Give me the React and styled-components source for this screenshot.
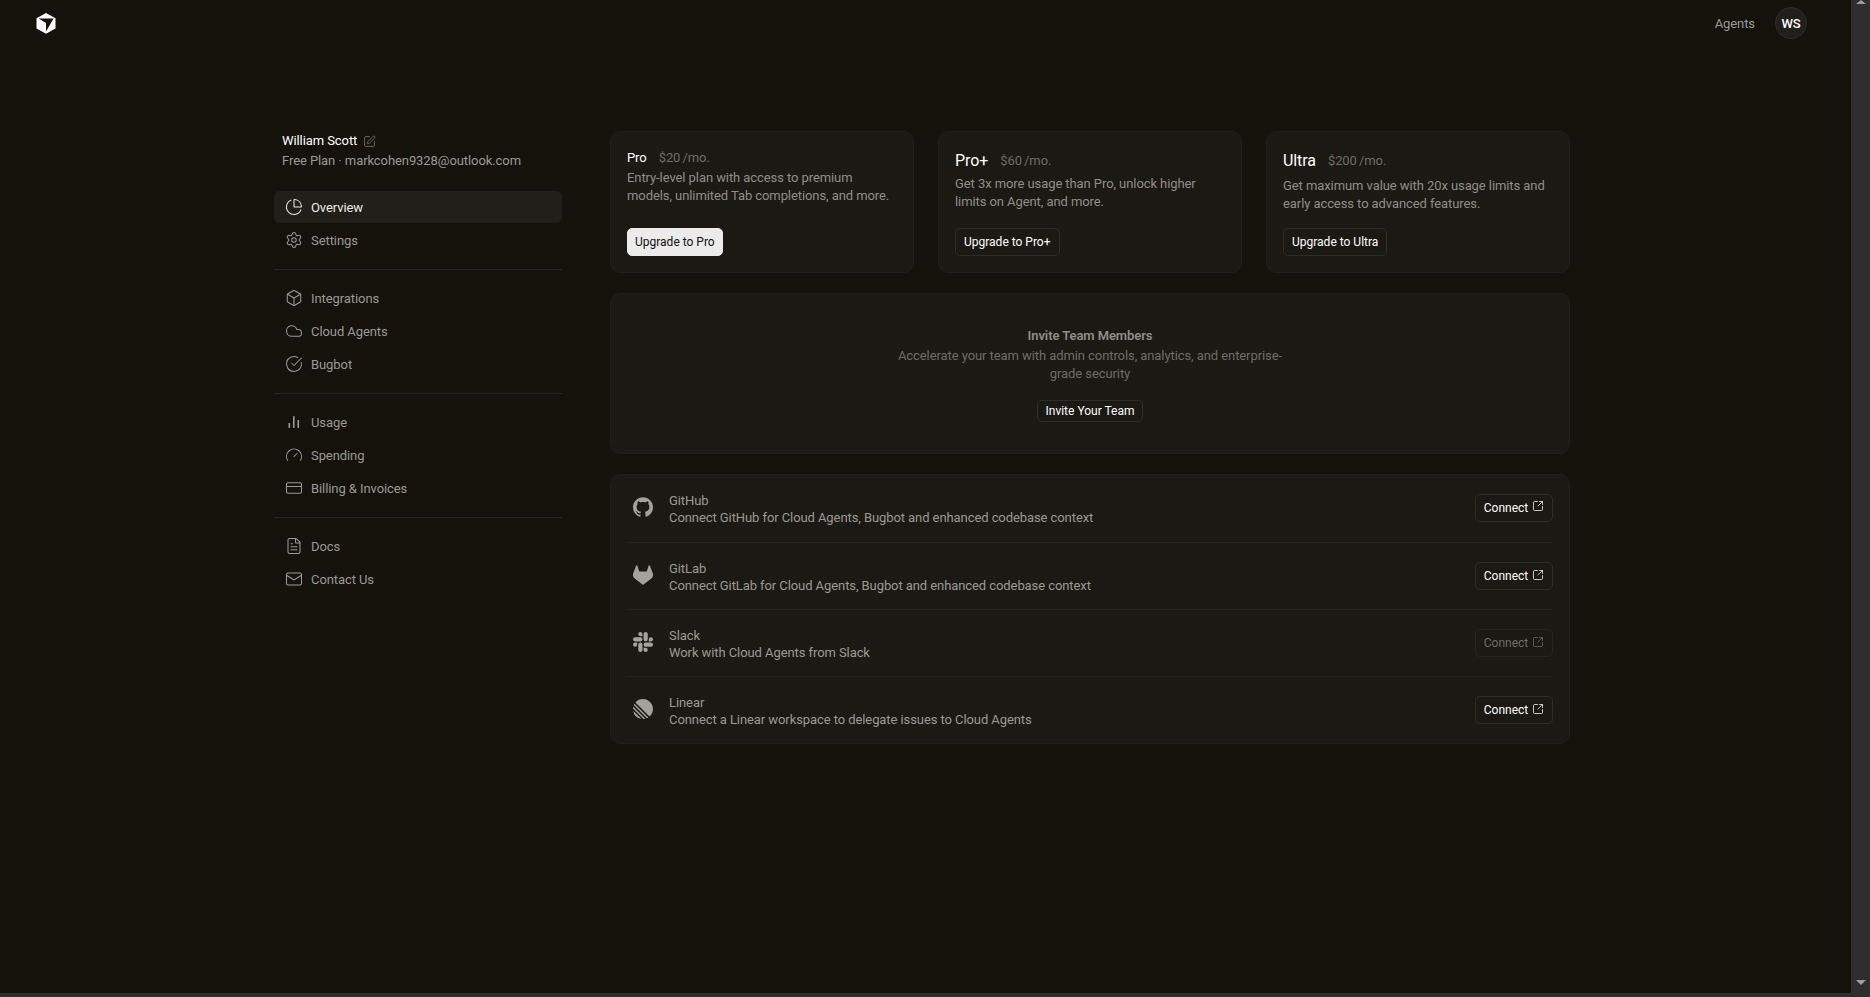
import React from "react";
import styled, { createGlobalStyle } from "styled-components";
import {
  ChartPie,
  Settings,
  Box,
  Cloud,
  CircleCheckBig,
  Gauge,
  CreditCard,
  FileText,
  Mail,
  SquarePen,
  SquareArrowOutUpRight,
} from "lucide-react";
import { SiGithub, SiGitlab, SiSlack, SiLinear } from "react-icons/si";

const GlobalStyle = createGlobalStyle`
  html, body {
    margin: 0;
    height: 100%;
    overflow: hidden;
    background: #14120b;
  }
  * { box-sizing: border-box; }
`;

const UsageIcon = () => (
  <svg width="18" height="18" viewBox="0 0 18 18" fill="currentColor">
    <rect x="3.5" y="10" width="1.6" height="5" rx="0.4" />
    <rect x="8" y="3" width="1.6" height="12" rx="0.4" />
    <rect x="12.5" y="7" width="1.6" height="8" rx="0.4" />
  </svg>
);

const navGroups = [
  [
    { label: "Overview", icon: ChartPie, active: true },
    { label: "Settings", icon: Settings },
  ],
  [
    { label: "Integrations", icon: Box },
    { label: "Cloud Agents", icon: Cloud },
    { label: "Bugbot", icon: CircleCheckBig },
  ],
  [
    { label: "Usage", icon: UsageIcon },
    { label: "Spending", icon: Gauge },
    { label: "Billing & Invoices", icon: CreditCard },
  ],
  [
    { label: "Docs", icon: FileText },
    { label: "Contact Us", icon: Mail },
  ],
];

const plans = [
  {
    name: "Pro",
    price: "$20",
    small: true,
    gap: 3,
    text: "Entry-level plan with access to premium models, unlimited Tab completions, and more.",
    cta: "Upgrade to Pro",
    primary: true,
  },
  {
    name: "Pro+",
    price: "$60",
    gap: 3,
    text: "Get 3x more usage than Pro, unlock higher limits on Agent, and more.",
    cta: "Upgrade to Pro+",
  },
  {
    name: "Ultra",
    price: "$200",
    gap: 5,
    text: "Get maximum value with 20x usage limits and early access to advanced features.",
    cta: "Upgrade to Ultra",
  },
];

const integrations = [
  { name: "GitHub", icon: SiGithub, text: "Connect GitHub for Cloud Agents, Bugbot and enhanced codebase context" },
  { name: "GitLab", icon: SiGitlab, text: "Connect GitLab for Cloud Agents, Bugbot and enhanced codebase context" },
  { name: "Slack", icon: SiSlack, text: "Work with Cloud Agents from Slack", disabled: true },
  { name: "Linear", icon: SiLinear, text: "Connect a Linear workspace to delegate issues to Cloud Agents" },
];

const Logo = () => (
  <svg width="20" height="22" viewBox="0 0 20 22">
    <path
      fill="#fff"
      fillRule="evenodd"
      d="M10 1 19.5 6.2V16.6L10 21.8.5 16.6V6.2ZM2.6 6.6 17.6 6.6 10 19.6 10 11Z"
    />
  </svg>
);

export default function App() {
  return (
    <Frame>
      <GlobalStyle />
      <Viewport>
        <Page>
          <Header>
            <Logo />
            <HeaderRight>
              <HeaderLink>Agents</HeaderLink>
              <Avatar>WS</Avatar>
            </HeaderRight>
          </Header>
          <Content>
            <Sidebar>
              <Profile>
                <ProfileName>
                  William Scott
                  <SquarePen size={13} strokeWidth={1.5} color="#77766f" />
                </ProfileName>
                <ProfileMeta>Free Plan · markcohen9328@outlook.com</ProfileMeta>
              </Profile>
              {navGroups.map((group, i) => (
                <NavGroup key={i}>
                  {group.map(({ label, icon: Icon, active }) => (
                    <NavItem key={label} $active={active}>
                      <Icon size={18} strokeWidth={1.4} />
                      {label}
                    </NavItem>
                  ))}
                </NavGroup>
              ))}
            </Sidebar>
            <Main>
              <PlanGrid>
                {plans.map((plan) => (
                  <PlanCard key={plan.name}>
                    <PlanHead $small={plan.small}>
                      <PlanName $small={plan.small}>{plan.name}</PlanName>
                      <PlanPrice>{plan.price} /mo.</PlanPrice>
                    </PlanHead>
                    <PlanText $gap={plan.gap}>{plan.text}</PlanText>
                    <Button $primary={plan.primary}>{plan.cta}</Button>
                  </PlanCard>
                ))}
              </PlanGrid>
              <InviteCard>
                <InviteTitle>Invite Team Members</InviteTitle>
                <InviteText>
                  Accelerate your team with admin controls, analytics, and enterprise-grade security
                </InviteText>
                <InviteButton>Invite Your Team</InviteButton>
              </InviteCard>
              <IntegrationCard>
                {integrations.map(({ name, icon: Icon, text, disabled }) => (
                  <IntegrationRow key={name}>
                    <IntegrationIcon>
                      <Icon size={20} />
                    </IntegrationIcon>
                    <IntegrationBody>
                      <IntegrationName>{name}</IntegrationName>
                      <IntegrationText>{text}</IntegrationText>
                    </IntegrationBody>
                    <ConnectButton $disabled={disabled}>
                      Connect
                      <SquareArrowOutUpRight size={12} strokeWidth={1.5} />
                    </ConnectButton>
                  </IntegrationRow>
                ))}
              </IntegrationCard>
            </Main>
          </Content>
        </Page>
        <ScrollTrack>
          <ArrowUp />
          <ArrowDown />
        </ScrollTrack>
      </Viewport>
      <ScrollBottom />
    </Frame>
  );
}

const Frame = styled.div`
  height: 997px;
  display: flex;
  flex-direction: column;
  font-family: "Roboto", "Liberation Sans", sans-serif;
  font-size: 13px;
  letter-spacing: -0.08px;
  color: #9a9994;
  background: #14120b;
`;

const Viewport = styled.div`
  flex: 1;
  display: flex;
  min-height: 0;
`;

const Page = styled.div`
  flex: 1;
  min-width: 0;
`;

const ScrollTrack = styled.div`
  width: 19px;
  background: #2e2e2e;
  display: flex;
  flex-direction: column;
  justify-content: space-between;
  align-items: center;
  padding-bottom: 8px;
`;

const ArrowUp = styled.div`
  width: 0;
  height: 0;
  border-left: 5px solid transparent;
  border-right: 5px solid transparent;
  border-bottom: 4px solid #9d9d9d;
`;

const ArrowDown = styled.div`
  width: 0;
  height: 0;
  border-left: 5px solid transparent;
  border-right: 5px solid transparent;
  border-top: 5px solid #9d9d9d;
`;

const ScrollBottom = styled.div`
  height: 4px;
  background: #2e2e2e;
`;

const Header = styled.header`
  height: 46px;
  padding: 0 44px 0 36px;
  display: flex;
  align-items: center;
  justify-content: space-between;
`;

const HeaderRight = styled.div`
  display: flex;
  align-items: center;
  gap: 20px;
`;

const HeaderLink = styled.span`
  color: #9a9994;
`;

const Avatar = styled.div`
  width: 32px;
  height: 32px;
  border-radius: 50%;
  background: #211f19;
  border: 1px solid #2e2c27;
  color: #fff;
  font-weight: 500;
  display: flex;
  align-items: center;
  justify-content: center;
`;

const Content = styled.div`
  display: flex;
  gap: 48px;
  padding: 85px 0 0 274px;
`;

const Sidebar = styled.aside`
  width: 288px;
  flex: none;
`;

const Profile = styled.div`
  padding: 1px 8px 0;
  height: 60px;
`;

const ProfileName = styled.div`
  color: #fff;
  line-height: 18px;
  display: flex;
  align-items: center;
  gap: 6px;
`;

const ProfileMeta = styled.div`
  line-height: 18px;
  margin-top: 2px;
`;

const NavGroup = styled.nav`
  display: flex;
  flex-direction: column;
  gap: 1px;
  padding-bottom: 13px;
  margin-bottom: 12px;
  border-bottom: 1px solid #26241f;

  &:last-child {
    border-bottom: none;
  }
`;

const NavItem = styled.a`
  height: 32px;
  padding: 0 11px;
  border-radius: 6px;
  display: flex;
  align-items: center;
  gap: 8px;
  color: ${(p) => (p.$active ? "#ecebe8" : "#9a9994")};
  background: ${(p) => (p.$active ? "#211f19" : "transparent")};
`;

const Main = styled.main`
  width: 960px;
  flex: none;
  display: flex;
  flex-direction: column;
  gap: 20px;
`;

const PlanGrid = styled.div`
  display: grid;
  grid-template-columns: repeat(3, 304px);
  gap: 24px;
`;

const Card = styled.section`
  background: #1b1913;
  border: 1px solid #201e19;
  border-radius: 10px;
`;

const PlanCard = styled(Card)`
  height: 142px;
  padding: 16px;
  display: flex;
  flex-direction: column;
  align-items: flex-start;
`;

const PlanHead = styled.div`
  display: flex;
  align-items: center;
  gap: 12px;
  height: ${(p) => (p.$small ? "18px" : "24px")};
`;

const PlanName = styled.span`
  color: #fff;
  font-size: ${(p) => (p.$small ? "13px" : "16px")};
`;

const PlanPrice = styled.span`
  color: #6d6c67;
  word-spacing: -1px;
`;

const PlanText = styled.p`
  margin: ${(p) => p.$gap}px 0 0;
  line-height: 18px;
  color: #8f8e89;
`;

const Button = styled.button`
  margin-top: auto;
  height: 28px;
  padding: 0 ${(p) => (p.$primary ? "7px" : "8px")};
  border-radius: 5px;
  font: inherit;
  font-size: 12px;
  color: ${(p) => (p.$primary ? "#14120b" : "#fff")};
  background: ${(p) => (p.$primary ? "#ebebeb" : "transparent")};
  border: 1px solid ${(p) => (p.$primary ? "#ebebeb" : "#2f2d28")};
`;

const InviteCard = styled(Card)`
  height: 161px;
  display: flex;
  flex-direction: column;
  align-items: center;
  padding-top: 33px;
`;

const InviteTitle = styled.div`
  font-weight: 600;
  line-height: 18px;
  color: #8f8e89;
`;

const InviteText = styled.p`
  margin: 2px 0 0;
  width: 400px;
  text-align: center;
  line-height: 18px;
  color: #6d6c67;
`;

const InviteButton = styled.button`
  margin-top: 17px;
  height: 22px;
  padding: 0 8px;
  border-radius: 5px;
  font: inherit;
  font-size: 12px;
  color: #fff;
  background: transparent;
  border: 1px solid #2f2d28;
`;

const IntegrationCard = styled(Card)`
  padding: 0 16px;
`;

const IntegrationRow = styled.div`
  height: 67px;
  display: flex;
  align-items: center;
  border-bottom: 1px solid #24221d;

  &:first-child {
    height: 68px;

    button {
      margin-bottom: 2px;
    }
  }

  &:last-child {
    height: 66px;
    border-bottom: none;
  }
`;

const IntegrationIcon = styled.div`
  width: 42px;
  padding-left: 6px;
  margin-top: -3px;
  display: flex;
  color: #a3a29e;
`;

const IntegrationBody = styled.div`
  flex: 1;
  line-height: 17px;
  padding-top: 1px;
`;

const IntegrationName = styled.div`
  color: #9a9994;
`;

const IntegrationText = styled.div`
  color: #9a9994;
`;

const ConnectButton = styled.button`
  height: 28px;
  width: 78px;
  padding: 0;
  border-radius: 5px;
  font: inherit;
  font-size: 12px;
  display: flex;
  align-items: center;
  justify-content: center;
  gap: 4px;
  color: ${(p) => (p.$disabled ? "#6d6c67" : "#fff")};
  background: transparent;
  border: 1px solid ${(p) => (p.$disabled ? "#262420" : "#2f2d28")};

  svg {
    margin-top: -3px;
  }
`;
